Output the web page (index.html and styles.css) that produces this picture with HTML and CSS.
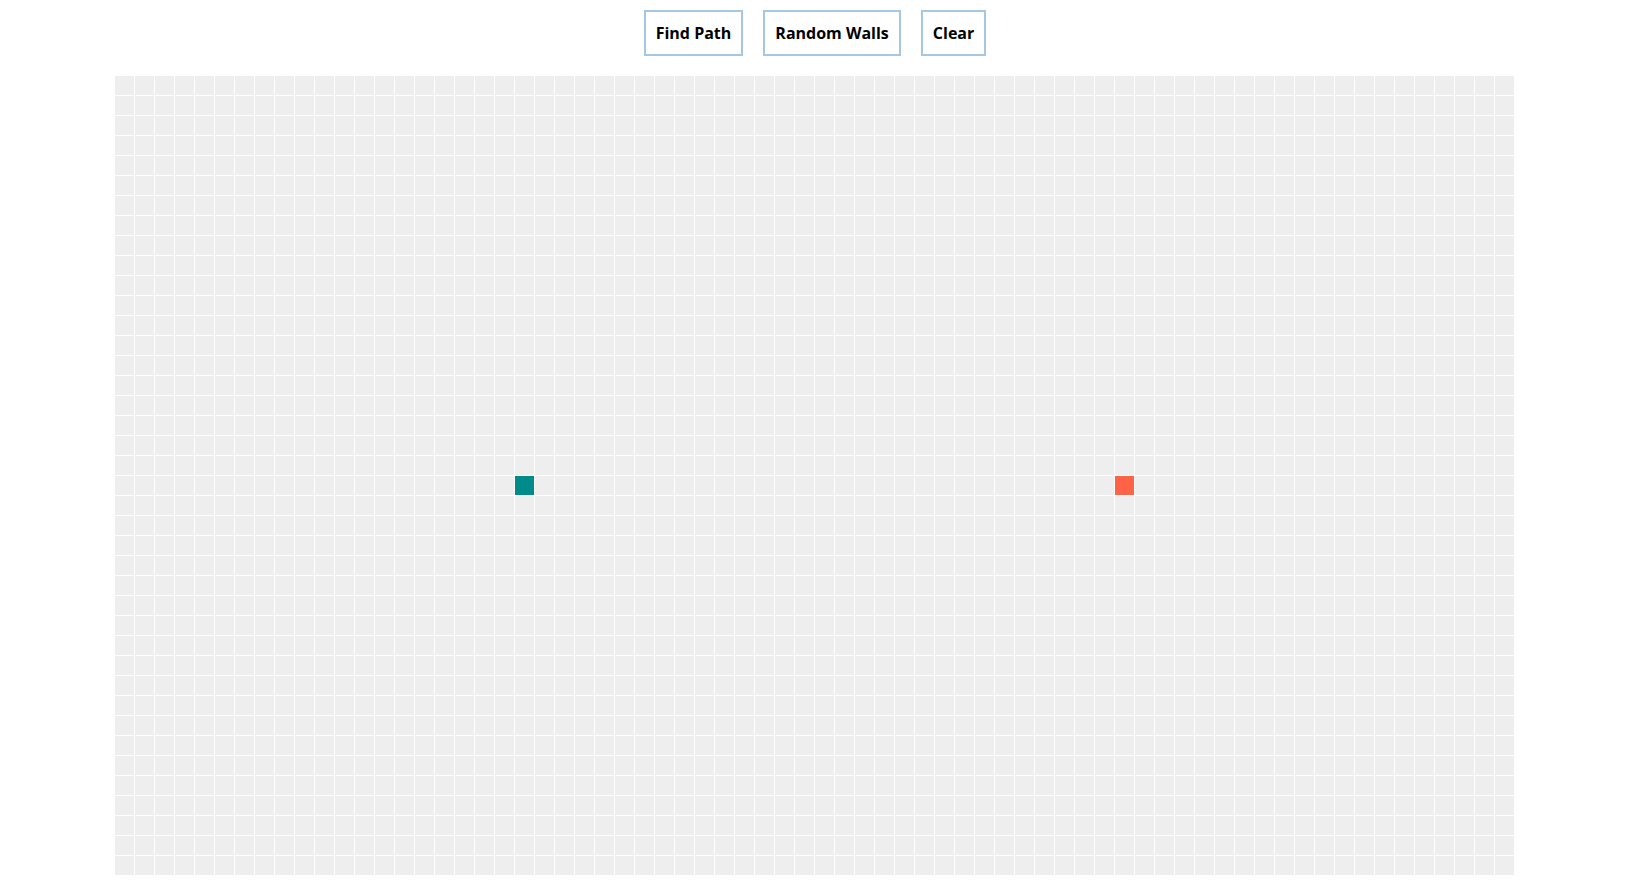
FILE: index.html
```html
<!DOCTYPE html>
<html lang="en">
<head>
<meta charset="utf-8">
<title>Pathfinder</title>
<link rel="stylesheet" href="styles.css">
</head>
<body>
<div class="app">
  <div class="controls">
    <button class="btn">Find Path</button>
    <button class="btn">Random Walls</button>
    <button class="btn">Clear</button>
  </div>
  <div class="grid" id="grid"></div>
</div>
<script src="script.js"></script>
</body>
</html>
```
FILE: styles.css
```css
html, body {
  margin: 0;
  padding: 0;
  background: #ffffff;
}
.app {
  width: 1630px;
  display: flex;
  flex-direction: column;
  align-items: center;
  font-family: "Open Sans", "Noto Sans", sans-serif;
}
.controls {
  display: flex;
  gap: 20px;
  margin-top: 10px;
}
.btn {
  font-family: "Open Sans", "Noto Sans", sans-serif;
  font-weight: 700;
  font-size: 16px;
  color: #000;
  background: #fff;
  border: 2px solid #a4c8e4;
  padding: 11px 10px 10px;
  line-height: 21px;
  height: 46px;
  margin: 0;
  cursor: pointer;
}
.grid {
  margin-top: 20px;
  width: 1400px;
  display: grid;
  grid-template-columns: repeat(70, 19px);
  grid-auto-rows: 19px;
  gap: 1px;
}
.cell {
  background: #eeeeee;
}
.cell.start {
  background: #008b8b;
}
.cell.end {
  background: #ff6347;
}
```
FILE: script.js
```js
const grid = document.getElementById('grid');
const frag = document.createDocumentFragment();
for (let r = 0; r < 40; r++) {
  for (let c = 0; c < 70; c++) {
    const d = document.createElement('div');
    d.className = 'cell';
    if (r === 20 && c === 20) d.classList.add('start');
    if (r === 20 && c === 50) d.classList.add('end');
    frag.appendChild(d);
  }
}
grid.appendChild(frag);
```
